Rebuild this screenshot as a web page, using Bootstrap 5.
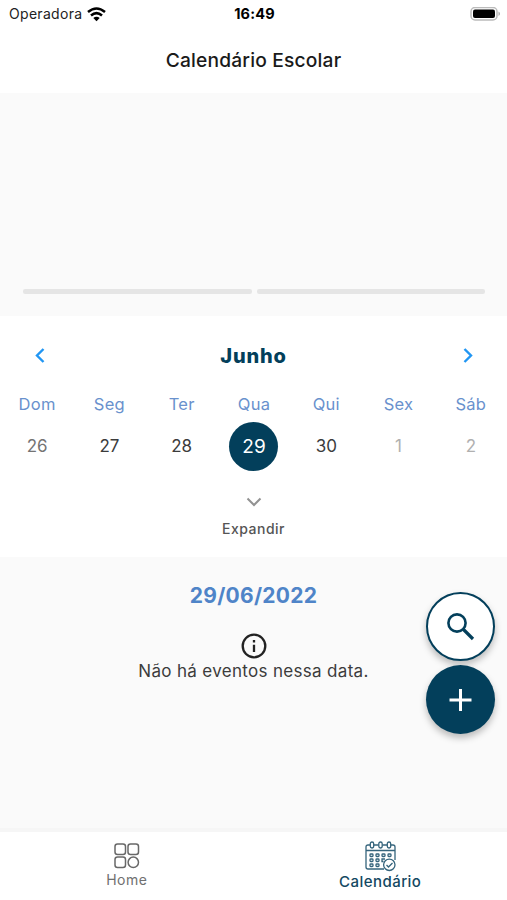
<!DOCTYPE html>
<html lang="pt-BR">
<head>
<meta charset="utf-8">
<meta name="viewport" content="width=device-width, initial-scale=1">
<title>Calendário Escolar</title>
<link href="https://cdn.jsdelivr.net/npm/bootstrap@5.3.0/dist/css/bootstrap.min.css" rel="stylesheet">
<style>
:root { --navy: #033f5b; --blue: #4f84c8; }
body { font-family: Inter, "Noto Sans", sans-serif; background: #fafafa; color: #3c3c3c; }
.screen { height: 900px; overflow: hidden; line-height: 1; }
.statusbar { height: 28px; padding: 0 7px 0 9px; font-size: 14px; color: #222; }
.carrier { letter-spacing: .3px; }
.statusbar .time { font-size: 14.5px; color: #000; letter-spacing: .2px; }
.titlebar { height: 65px; padding-top: 1px; font-size: 19.2px; letter-spacing: .18px; color: #1a1a1a; }
.carousel-area { height: 223px; padding: 0 22px 22px 23px; gap: 5px; }
.indicator { height: 5px; background: #e5e5e5; border-radius: 2px; }
.calendar { height: 241px; }
.month-row { height: 79px; padding: 0 30px; }
.month { font-size: 20px; font-weight: 800; color: var(--navy); letter-spacing: .8px; }
.week { grid-template-columns: repeat(7, 1fr); font-size: 17px; padding-left: 1px; }
.weekday { height: 20px; padding-top: 1px; color: #6991cd; font-size: 16.5px; letter-spacing: .3px; }
.day { height: 62px; }
.today { width: 49px; height: 49px; background: var(--navy); color: #fff; font-size: 19px; }
.expand { font-size: 14px; color: #555; gap: 15px; padding-top: 20px; letter-spacing: .5px; }
.events { padding-top: 28px; }
.date { font-size: 21px; color: var(--blue); letter-spacing: .25px; }
.empty { font-size: 17px; gap: 4px; margin-top: 27px; letter-spacing: .32px; }
.fabs { right: 12px; top: 592px; gap: 4px; }
.fab { width: 69px; height: 69px; box-shadow: 0 4px 7px rgba(0,0,0,.26); }
.fab-search { border: 2.5px solid var(--navy); background: #fff; color: var(--navy); }
.fab-add { background: var(--navy); color: #fff; }
.tabs { height: 72px; border-top: 4px solid #f6f6f6; }
.tab-home { font-size: 14px; color: #707070; padding-top: 11px; gap: 4px; letter-spacing: .5px; }
.tab-cal { font-size: 15px; color: #134862; padding-top: 9px; gap: 2px; letter-spacing: .45px; }
</style>
<script src="https://cdn.jsdelivr.net/npm/bootstrap@5.3.0/dist/js/bootstrap.bundle.min.js"></script>
</head>
<body>
<div class="screen d-flex flex-column position-relative">
  <header class="bg-white">
    <div class="statusbar row g-0 align-items-center">
      <div class="col d-flex align-items-center gap-1"><span class="carrier">Operadora</span>
        <svg width="21" height="15" viewBox="0 0 21 15" fill="none" stroke="#000" stroke-width="2.500"><path d="M2 5Q10.500-2 19 5M5 8.500Q10.500 3.700 16 8.500"/><path d="M7.300 11Q10.500 8.500 13.700 11L10.500 14.300Z" fill="#000" stroke="none"/></svg>
      </div>
      <div class="col-auto time fw-bold">16:49</div>
      <div class="col d-flex justify-content-end">
        <svg width="30" height="15" viewBox="0 0 30 15"><rect x="1" y=".5" width="26" height="12.500" rx="4" fill="#fff" stroke="#bbb" stroke-width="1.500"/><rect x="3" y="2.500" width="22" height="8.500" rx="2" fill="#000"/><path d="M28.500 4.500v4.500q1.500-.7 1.500-2.250t-1.500-2.250" fill="#aaa"/></svg>
      </div>
    </div>
    <div class="titlebar d-flex align-items-center justify-content-center fw-medium">Calendário Escolar</div>
  </header>

  <section class="carousel-area d-flex align-items-end">
    <div class="indicator flex-fill"></div><div class="indicator flex-fill"></div>
  </section>

  <section class="calendar bg-white">
    <div class="month-row d-flex align-items-center justify-content-between">
      <svg width="20" height="20" viewBox="0 0 20 20" fill="none" stroke="#2196f3" stroke-width="2.400"><path d="M13.500 3 7 9.500l6.500 6.500"/></svg>
      <div class="month">Junho</div>
      <svg width="20" height="20" viewBox="0 0 20 20" fill="none" stroke="#2196f3" stroke-width="2.400"><path d="m7.500 3 6.500 6.500-6.500 6.500"/></svg>
    </div>
    <div class="week d-grid text-center">
      <div class="weekday">Dom</div><div class="weekday">Seg</div><div class="weekday">Ter</div><div class="weekday">Qua</div><div class="weekday">Qui</div><div class="weekday">Sex</div><div class="weekday">Sáb</div>
      <div class="day d-flex align-items-center justify-content-center" style="color:#747474">26</div>
      <div class="day d-flex align-items-center justify-content-center">27</div>
      <div class="day d-flex align-items-center justify-content-center">28</div>
      <div class="day d-flex align-items-center justify-content-center"><span class="today rounded-circle d-flex align-items-center justify-content-center">29</span></div>
      <div class="day d-flex align-items-center justify-content-center">30</div>
      <div class="day d-flex align-items-center justify-content-center" style="color:#b0b0b0">1</div>
      <div class="day d-flex align-items-center justify-content-center" style="color:#b0b0b0">2</div>
    </div>
    <div class="expand d-flex flex-column align-items-center fw-medium">
      <svg width="16" height="10" viewBox="0 0 16 10" fill="none" stroke="#929292" stroke-width="2"><path d="m1.500 1.500 6.500 6.500 6.500-6.500"/></svg>
      <span>Expandir</span>
    </div>
  </section>

  <main class="events flex-fill text-center">
    <div class="date fw-bold">29/06/2022</div>
    <div class="empty d-flex flex-column align-items-center">
      <svg width="26" height="26" viewBox="0 0 26 26" fill="none" stroke="#222" stroke-width="2.300"><circle cx="13" cy="13" r="11.300"/><path d="M13 11.800v7.200M13 7v2.400"/></svg>
      <span>Não há eventos nessa data.</span>
    </div>
  </main>

  <div class="fabs position-absolute d-flex flex-column">
    <button class="fab fab-search btn rounded-circle p-0 d-flex align-items-center justify-content-center" aria-label="Buscar">
      <svg width="30" height="30" viewBox="0 0 30 30" fill="none" stroke="currentColor"><circle cx="11" cy="11" r="8.600" stroke-width="2.600"/><path d="m17.500 17.500 9.500 9.500" stroke-width="3.200"/></svg>
    </button>
    <button class="fab fab-add btn border-0 rounded-circle p-0 d-flex align-items-center justify-content-center" aria-label="Adicionar">
      <svg width="24" height="24" viewBox="0 0 24 24" stroke="currentColor" stroke-width="3"><path d="M11.500 1v22M.5 12h22"/></svg>
    </button>
  </div>

  <nav class="tabs bg-white row g-0">
    <div class="col-6 tab-home d-flex flex-column align-items-center">
      <svg width="26" height="26" viewBox="0 0 26 26" fill="none" stroke="#686868" stroke-width="1.500"><rect x="1" y="1" width="10.500" height="10.500" rx="2.500"/><rect x="14" y="1" width="10.500" height="10.500" rx="2.500"/><rect x="1" y="14" width="10.500" height="10.500" rx="2.500"/><circle cx="19.300" cy="19.300" r="5.200"/></svg>
      <span>Home</span>
    </div>
    <div class="col-6 tab-cal d-flex flex-column align-items-center fw-medium">
      <svg width="31" height="31" viewBox="0 0 31 31" fill="none" stroke="#35647c" stroke-width="1.300">
        <path d="M5 4H3Q1 4 1 6v20q0 2 2 2h16M9 4h4.500M17.500 4H22M26 4h2q2 0 2 2v13M1 9.500h29"/>
        <rect x="5.300" y="1" width="3.400" height="6" rx="1.700"/><rect x="13.800" y="1" width="3.400" height="6" rx="1.700"/><rect x="22.300" y="1" width="3.400" height="6" rx="1.700"/>
        <g><rect x="5" y="13" width="3" height="2.500" rx=".8"/><rect x="11" y="13" width="3" height="2.500" rx=".8"/><rect x="17" y="13" width="3" height="2.500" rx=".8"/><rect x="23" y="13" width="3" height="2.500" rx=".8"/><rect x="5" y="18" width="3" height="2.500" rx=".8"/><rect x="11" y="18" width="3" height="2.500" rx=".8"/><path d="M20 18h-3v2.500h1.500"/><rect x="5" y="23" width="3" height="2.500" rx=".8"/><rect x="11" y="23" width="3" height="2.500" rx=".8"/></g>
        <circle cx="24.300" cy="23.800" r="5.700" fill="#fff"/><path d="m21.500 24 2 2 4-4"/>
      </svg>
      <span>Calendário</span>
    </div>
  </nav>
</div>
</body>
</html>
